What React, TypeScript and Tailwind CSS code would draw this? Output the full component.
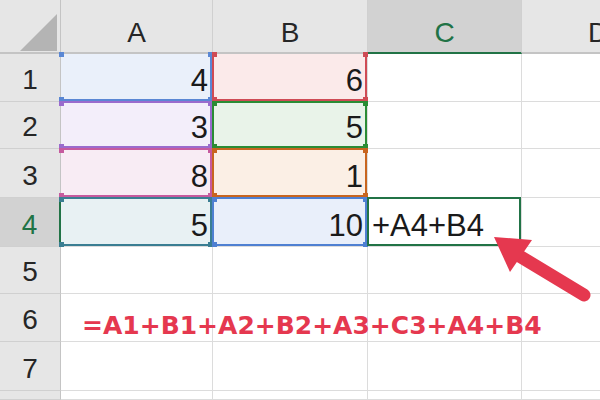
import React from "react";

type Ref = { bg: string; line: string; dot: string };

// colours of the cells referenced by the formula
const refs: Record<string, Ref> = {
  A1: { bg: "bg-[#eaf0fa]", line: "border-[#5a87d4]", dot: "bg-[#5a87d4]" },
  B1: { bg: "bg-[#fbeaea]", line: "border-[#cf4b55]", dot: "bg-[#cf4b55]" },
  A2: { bg: "bg-[#f3eefa]", line: "border-[#9a6bcd]", dot: "bg-[#9a6bcd]" },
  B2: { bg: "bg-[#e9f3e9]", line: "border-[#2a8c35]", dot: "bg-[#2a8c35]" },
  A3: { bg: "bg-[#f8ecf4]", line: "border-[#c65a9e]", dot: "bg-[#c65a9e]" },
  B3: { bg: "bg-[#fbefe5]", line: "border-[#c8651f]", dot: "bg-[#c8651f]" },
  A4: { bg: "bg-[#e8f1f3]", line: "border-[#3a7e92]", dot: "bg-[#3a7e92]" },
  B4: { bg: "bg-[#e9effa]", line: "border-[#4f80d2]", dot: "bg-[#4f80d2]" },
};

const values: Record<string, string> = {
  A1: "4",
  B1: "6",
  A2: "3",
  B2: "5",
  A3: "8",
  B3: "1",
  A4: "5",
  B4: "10",
};

const cols = ["A", "B", "C", "D"];
const rows = [1, 2, 3, 4, 5, 6, 7, 8];

function RefBox({ id, r }: { id: string; r: Ref }) {
  const colA = id.startsWith("A");
  const row1 = id.endsWith("1");
  return (
    <div
      className={`absolute right-0 bottom-0 border-2 ${r.line} ${colA ? "left-0 border-l-0" : "-left-px"} ${
        row1 ? "top-0 border-t-0" : "-top-px"
      }`}
    >
      <span className={`absolute -left-[2px] -top-[2px] w-[5px] h-[5px] ${r.dot}`} />
      <span className={`absolute -right-[3px] -top-[2px] w-[5px] h-[5px] ${r.dot}`} />
      <span className={`absolute -left-[2px] -bottom-[3px] w-[5px] h-[5px] ${r.dot}`} />
      <span className={`absolute -right-[3px] -bottom-[3px] w-[5px] h-[5px] ${r.dot}`} />
    </div>
  );
}

function Cell({ col, row }: { col: string; row: number }) {
  const id = `${col}${row}`;
  const r = refs[id];
  const active = id === "C4";
  return (
    <div className={`relative flex items-end border-r border-b border-[#dcdcdc] ${r ? r.bg : ""}`}>
      {values[id] && (
        <span className="w-full text-right pr-[4px] pb-[5px] text-[31px] leading-none text-[#1a1a1a]">
          {values[id]}
        </span>
      )}
      {active && (
        <span className="pl-[4px] pb-[5px] text-[31px] leading-none text-[#1a1a1a] whitespace-nowrap">
          +A4+B4
        </span>
      )}
      {id === "A6" && (
        <span className="relative z-10 pl-[21px] pb-[3px] whitespace-nowrap font-['DejaVu_Sans',sans-serif] font-bold text-[25px] leading-none text-[#e5384f]">
          =A1+B1+A2+B2+A3+C3+A4+B4
        </span>
      )}
      {r && <RefBox id={id} r={r} />}
      {active && <div className="absolute -left-px -top-px right-0 bottom-0 border-2 border-[#217346]" />}
    </div>
  );
}

export default function App() {
  return (
    <div className="relative w-[600px] h-[400px] overflow-hidden bg-white font-['Liberation_Sans',Arial,sans-serif]">
      <div className="grid grid-cols-[61px_152px_155px_154px_153px] grid-rows-[54px_48px_47px_49px_49px_47px_48px_49px_9px]">
        {/* corner */}
        <div className="flex items-end justify-end pr-[3px] pb-[1px] bg-[#e6e6e6] border-r border-b-2 border-[#c4c4c4]">
          <svg width="37" height="37" viewBox="0 0 37 37">
            <polygon points="0,37 37,37 37,0" fill="#b4b4b4" />
          </svg>
        </div>
        {cols.map((c) => (
          <div
            key={c}
            className={`flex items-end justify-center pb-[5px] text-[28px] leading-none border-r border-[#d0d0d0] border-b-2 ${
              c === "C"
                ? "bg-[#d2d2d2] text-[#217346] border-b-[#217346]"
                : "bg-[#e6e6e6] text-[#262626] border-b-[#c4c4c4]"
            }`}
          >
            {c}
          </div>
        ))}

        {rows.map((n) => (
          <React.Fragment key={n}>
            <div
              className={`flex items-end justify-center pb-[7px] text-[28px] leading-none border-b border-[#d0d0d0] ${
                n === 4
                  ? "bg-[#d2d2d2] text-[#217346] border-r-2 border-r-[#217346]"
                  : "bg-[#e6e6e6] text-[#262626] border-r border-r-[#c4c4c4]"
              }`}
            >
              {n < 8 ? n : ""}
            </div>
            {cols.map((c) => (
              <Cell key={c} col={c} row={n} />
            ))}
          </React.Fragment>
        ))}
      </div>

      {/* red arrow pointing at C4 */}
      <svg className="absolute left-0 top-0 pointer-events-none z-20" width="600" height="400" viewBox="0 0 600 400">
        <line x1="516" y1="254" x2="584" y2="295" stroke="#e5384f" strokeWidth="13" strokeLinecap="round" />
        <polygon points="494,237 532,240 510,272" fill="#e5384f" />
      </svg>
    </div>
  );
}
